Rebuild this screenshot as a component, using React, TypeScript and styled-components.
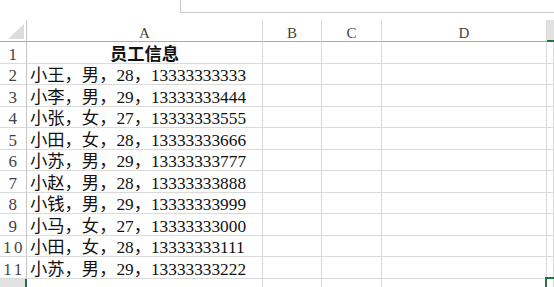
import React from "react";
import styled, { createGlobalStyle, css } from "styled-components";

const Global = createGlobalStyle`
  html, body { margin: 0; padding: 0; background: #ffffff; overflow: hidden; }
  body { width: 554px; height: 287px; }
`;

const GRID = "27px 236px 59px 60px 165px 1fr";
const LINE = "#dadada";
const GREEN = "#217346";

const Page = styled.div`
  width: 554px;
  height: 287px;
  overflow: hidden;
  display: flex;
  flex-direction: column;
  background: #fff;
`;

const TopBar = styled.div`
  height: 20px;
  flex: none;
  display: flex;
  align-items: flex-start;
`;

const FormulaBox = styled.div`
  margin-left: 180px;
  flex: 1;
  height: 12px;
  border-left: 1px solid #c8c8c8;
  border-bottom: 1px solid #c8c8c8;
  background: #fff;
`;

const Row = styled.div<{ $h: string }>`
  display: grid;
  grid-template-columns: ${GRID};
  height: ${(p) => p.$h};
  flex: none;
`;

const HeadCell = styled.div<{ $selected?: boolean }>`
  display: flex;
  align-items: flex-end;
  justify-content: center;
  border-right: 1px solid ${LINE};
  border-bottom: 1px solid #ababab;
  font-family: "Liberation Serif", serif;
  font-size: 15px;
  line-height: 15px;
  color: #444;
  ${(p) =>
    p.$selected &&
    css`
      background: #e1e1e1;
      border-bottom: 2px solid ${GREEN};
      border-right: none;
    `}
`;

const Corner = styled.div`
  display: flex;
  align-items: flex-end;
  justify-content: flex-end;
  padding: 0 2px 2px 0;
  border-right: 1px solid #c6c6c6;
  border-bottom: 1px solid #ababab;
`;

const Triangle = styled.div`
  width: 0;
  height: 0;
  border-left: 16px solid transparent;
  border-bottom: 15px solid #dcdcdc;
`;

const RowNum = styled.div<{ $selected?: boolean }>`
  display: flex;
  align-items: flex-end;
  justify-content: center;
  padding-left: 2px;
  border-right: 1px solid #c6c6c6;
  border-bottom: 1px solid ${LINE};
  font-family: "Liberation Serif", serif;
  font-size: 17px;
  line-height: 17px;
  letter-spacing: 2.5px;
  color: #444;
  overflow: hidden;
  ${(p) =>
    p.$selected &&
    css`
      background: #e1e1e1;
      border-right: 2px solid ${GREEN};
      align-items: flex-start;
      padding-top: 5px;
    `}
`;

const Cell = styled.div<{ $title?: boolean; $active?: boolean }>`
  position: relative;
  display: flex;
  align-items: flex-end;
  justify-content: ${(p) => (p.$title ? "center" : "flex-start")};
  padding: 0 3px 0 3px;
  border-right: 1px solid ${LINE};
  border-bottom: 1px solid ${LINE};
  font-family: "Liberation Serif", "Noto Sans CJK SC", serif;
  font-size: 17.3px;
  line-height: 17px;
  font-weight: ${(p) => (p.$title ? 700 : 400)};
  color: #111;
  white-space: nowrap;
  ${(p) =>
    p.$active &&
    css`
      &::before {
        content: "";
        position: absolute;
        left: -2px;
        top: -2px;
        right: -20px;
        bottom: -20px;
        border-top: 2px solid ${GREEN};
        border-left: 2px solid ${GREEN};
      }
    `}
`;

const data = [
  "小王，男，28，13333333333",
  "小李，男，29，13333333444",
  "小张，女，27，13333333555",
  "小田，女，28，13333333666",
  "小苏，男，29，13333333777",
  "小赵，男，28，13333333888",
  "小钱，男，29，13333333999",
  "小马，女，27，13333333000",
  "小田，女，28，13333333111",
  "小苏，男，29，13333333222",
];

export default function App() {
  const rows = [{ text: "员工信息", title: true }, ...data.map((t) => ({ text: t, title: false }))];
  return (
    <>
      <Global />
      <Page>
        <TopBar>
          <FormulaBox />
        </TopBar>
        <Row $h="22px">
          <Corner>
            <Triangle />
          </Corner>
          <HeadCell>A</HeadCell>
          <HeadCell>B</HeadCell>
          <HeadCell>C</HeadCell>
          <HeadCell>D</HeadCell>
          <HeadCell $selected />
        </Row>
        {rows.map((r, i) => (
          <Row key={i} $h="21.5px">
            <RowNum>{i + 1}</RowNum>
            <Cell $title={r.title}>{r.text}</Cell>
            <Cell />
            <Cell />
            <Cell />
            <Cell />
          </Row>
        ))}
        <Row $h="22px">
          <RowNum $selected>12</RowNum>
          <Cell />
          <Cell />
          <Cell />
          <Cell />
          <Cell $active />
        </Row>
      </Page>
    </>
  );
}
